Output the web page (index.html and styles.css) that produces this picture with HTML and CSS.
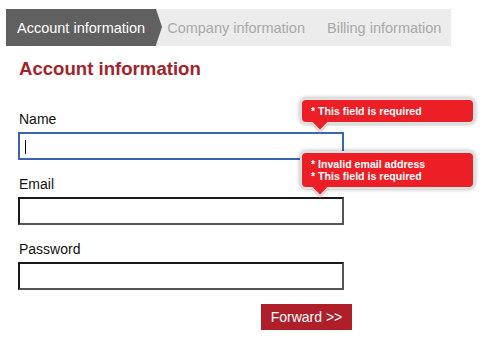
FILE: index.html
```html
<!DOCTYPE html>
<html lang="en">
<head>
    <meta charset="UTF-8">
    <title>Account information</title>
    <link rel="stylesheet" href="styles.css">
</head>
<body>
    <ul class="steps">
        <li class="step active">Account information</li>
        <li class="step">Company information</li>
        <li class="step">Billing information</li>
    </ul>

    <h2 class="title">Account information</h2>

    <form class="form">
        <div class="field">
            <label for="name">Name</label>
            <div class="control">
                <input type="text" id="name" class="input focused">
                <span class="caret"></span>
                <div class="error-tip">* This field is required</div>
            </div>
        </div>
        <div class="field">
            <label for="email">Email</label>
            <div class="control">
                <input type="text" id="email" class="input">
                <div class="error-tip">* Invalid email address<br>* This field is required</div>
            </div>
        </div>
        <div class="field">
            <label for="password">Password</label>
            <div class="control">
                <input type="password" id="password" class="input">
            </div>
        </div>
        <div class="actions">
            <button type="button" class="btn-forward">Forward &gt;&gt;</button>
        </div>
    </form>
</body>
</html>
```

FILE: styles.css
```css
body {
    font-family: "Liberation Sans", Arial, sans-serif;
    margin: 0;
    padding: 9px 0 0 6px;
    color: #111;
}
.steps {
    display: flex;
    width: 445px;
    height: 37px;
    margin: 0;
    padding: 0;
    list-style: none;
    background-color: #ececec;
}
.step {
    display: flex;
    align-items: center;
    flex-shrink: 0;
    padding: 0 11px;
    font-size: 14.5px;
    white-space: nowrap;
    color: #a9a9a9;
}
.step.active {
    position: relative;
    background-color: #606060;
    color: #fff;
}
.step.active::after {
    content: "";
    position: absolute;
    right: -6px;
    top: 0;
    border-top: 18.5px solid transparent;
    border-bottom: 18.5px solid transparent;
    border-left: 6px solid #606060;
}
.title {
    margin: 12px 0 0 13px;
    font-size: 18.6px;
    line-height: 22px;
    color: #a4232b;
}
.form {
    width: 334px;
    margin: 31px 0 0 12px;
}
.field {
    display: flex;
    flex-direction: column;
    gap: 5px;
    margin-bottom: 16px;
}
.field label {
    padding-left: 1px;
    font-size: 14px;
    line-height: 16px;
}
.control {
    position: relative;
    width: 326px;
}
.input {
    display: block;
    box-sizing: border-box;
    width: 326px;
    height: 28px;
    margin: 0;
    border: 2px solid #1a1a1a;
    border-right-color: #555;
    border-bottom-color: #555;
    background: #fff;
    outline: none;
}
.input.focused {
    border-color: #3a66ae;
}
.caret {
    position: absolute;
    left: 7px;
    top: 8px;
    width: 1px;
    height: 14px;
    background: #000;
}
.error-tip {
    position: absolute;
    left: 282px;
    bottom: calc(100% + 8px);
    box-sizing: border-box;
    width: 175px;
    padding: 5px 9px;
    border: 2px solid #e2e2e2;
    border-radius: 6px;
    background: #ec1f26;
    box-shadow: 0 0 4px rgba(0, 0, 0, 0.35);
    font-size: 10.6px;
    line-height: 12px;
    font-weight: bold;
    color: #fff;
}
.error-tip::after {
    content: "";
    position: absolute;
    left: 12px;
    bottom: -8px;
    width: 10px;
    height: 10px;
    background: #ec1f26;
    border-right: 2px solid #e2e2e2;
    border-bottom: 2px solid #e2e2e2;
    transform: rotate(45deg);
}
.actions {
    display: flex;
    justify-content: flex-end;
    margin-top: -2px;
}
.btn-forward {
    width: 91px;
    height: 26px;
    border: none;
    background-color: #ae1f2a;
    color: #fff;
    font-family: "Liberation Sans", Arial, sans-serif;
    font-size: 14px;
    cursor: pointer;
}
```
